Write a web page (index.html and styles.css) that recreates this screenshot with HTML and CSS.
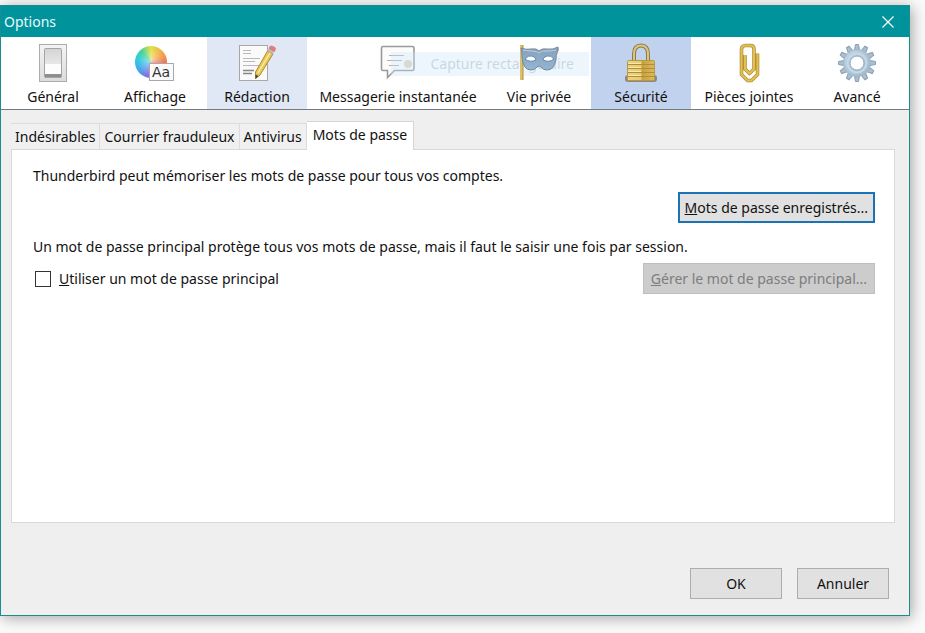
FILE: index.html
```html
<!DOCTYPE html>
<html lang="fr">
<head>
    <meta charset="UTF-8">
    <meta name="viewport" content="width=device-width, initial-scale=1.0">
    <title>Options</title>
    <link rel="stylesheet" href="styles.css">
</head>
<body>
    <div class="window">
        <header class="title-bar">
            <h1>Options</h1>
            <button class="close" aria-label="Fermer">
                <svg width="12" height="12" viewBox="0 0 12 12"><path d="M0.5 0.5 L11.5 11.5 M11.5 0.5 L0.5 11.5" stroke="#fff" stroke-width="1.2"/></svg>
            </button>
        </header>

        <nav class="categories">
            <button class="category">
                <svg width="40" height="40" viewBox="0 0 40 40">
                    <defs>
                        <linearGradient id="plate" x1="0" y1="0" x2="0" y2="1"><stop offset="0" stop-color="#f4f4f4"/><stop offset="1" stop-color="#dcdcdc"/></linearGradient>
                        <linearGradient id="rocker" x1="0" y1="0" x2="0" y2="1"><stop offset="0" stop-color="#d4d4d4"/><stop offset="1" stop-color="#e9e9e9"/></linearGradient>
                        <linearGradient id="shade" x1="0" y1="0" x2="0" y2="1"><stop offset="0" stop-color="#c4c4c4"/><stop offset="1" stop-color="#8a8a8a"/></linearGradient>
                    </defs>
                    <rect x="6.5" y="1.5" width="27" height="37" fill="url(#plate)" stroke="#acacac"/>
                    <rect x="11.5" y="5.5" width="17" height="29" rx="1" fill="url(#shade)" stroke="#a4a4a4"/>
                    <rect x="12" y="6" width="16" height="16" fill="url(#rocker)"/>
                    <rect x="12" y="21" width="16" height="10" fill="#fdfdfd"/>
                </svg>
                <span>Général</span>
            </button>
            <button class="category">
                <svg width="40" height="40" viewBox="0 0 40 40">
                    <foreignObject x="0" y="3" width="32" height="32"><div class="color-wheel"></div></foreignObject>
                    <rect x="14.5" y="20.5" width="24" height="17" fill="#fafafa" stroke="#a9a9a9"/>
                    <text x="17" y="34" class="wheel-text">Aa</text>
                </svg>
                <span>Affichage</span>
            </button>
            <button class="category hover">
                <svg width="40" height="40" viewBox="0 0 40 40">
                    <rect x="2.5" y="2.5" width="28" height="35" fill="#fafafa" stroke="#a8a8a8"/>
                    <path d="M6 7.5 h8 M6 10.5 h8 M6 15.5 h17 M6 18.5 h12 M6 22.5 h16" stroke="#b9b9b9"/>
                    <path d="M6 27.5 h11 M6 30.5 h9" stroke="#858585" stroke-width="1.5"/>
                    <path d="M30.5 8 L36 11 L23 32 L18.5 35.5 L18.5 29 Z" fill="#e8c650" stroke="#b08d38"/>
                    <path d="M33 10 L21 30" stroke="#fae99a" stroke-width="1.5"/>
                    <path d="M18.5 31.5 L21.5 33 L18.5 36 Z" fill="#444"/>
                    <path d="M30.5 8 L32 5.5 L37.5 8.5 L36 11 Z" fill="#b8bdc3"/>
                    <path d="M32 5.5 L33 3.5 Q34 2 38 4.5 Q39 5 37.5 8.5 Z" fill="#e57b78" stroke="#e08080"/>
                </svg>
                <span>Rédaction</span>
            </button>
            <button class="category">
                <svg width="40" height="40" viewBox="0 0 40 40">
                    <path d="M4.5 3.5 h30 q1.5 0 1.5 1.5 v21 q0 1.5 -1.5 1.5 h-18 l-7 7 v-7 h-4.5 q-1.5 0 -1.5 -1.5 v-21 q0 -1.5 1.5 -1.5 z" fill="#fcfcfc" stroke="#9a9a9a" stroke-width="1.6"/>
                    <path d="M11 12.5 h15 M9 17.5 h15 M11 22.5 h10" stroke="#b0b0b0"/>
                </svg>
                <span>Messagerie instantanée</span>
            </button>
            <button class="category">
                <svg class="above-hint" width="40" height="40" viewBox="0 0 40 40">
                    <defs><linearGradient id="mask" x1="0" y1="0" x2="0" y2="1"><stop offset="0" stop-color="#86a0b9"/><stop offset="1" stop-color="#94b5d6"/></linearGradient></defs>
                    <rect x="1" y="2" width="3" height="35" fill="#dcc06a"/>
                    <path d="M4 2 v35" stroke="#a98f45"/>
                    <path d="M2 5 q5 2 10 1 q6 -1 8 2 q3 -3 8 -2 q6 1 11 -2 q1 3 -1 6 q-1 2 -1 7 q-2 10 -9 10 q-4 0 -6 -3 q-2 -2 -4 0 q-2 3 -6 3 q-8 0 -9 -13 q0 -5 -1 -9 z" fill="url(#mask)" stroke="#76899b"/>
                    <path d="M4 7 q5 1 9 1 q5 0 7 2 q3 -3 8 -2 q5 0 9 -1" fill="none" stroke="#bdd0e0"/>
                    <path d="M6 16 q3 -4 7 -3 q4 1 4 4 q-6 3 -11 -1 z M24 17 q0 -3 4 -4 q4 -1 7 3 q-5 4 -11 1 z" fill="#fff" stroke="#5f87ae"/>
                </svg>
                <span>Vie privée</span>
            </button>
            <button class="category selected">
                <svg width="40" height="40" viewBox="0 0 40 40">
                    <defs><linearGradient id="lock" x1="0" y1="0" x2="1" y2="0"><stop offset="0" stop-color="#edd47c"/><stop offset="0.5" stop-color="#e6ca70"/><stop offset="0.54" stop-color="#c7a03e"/><stop offset="1" stop-color="#dcbd5b"/></linearGradient></defs>
                    <rect x="4" y="32" width="32" height="7" rx="3" fill="#8b897f"/>
                    <path d="M13 18 v-7 q0 -8.5 7 -8.5 t7 8.5 v7" fill="none" stroke="#8f7b3c" stroke-width="4"/>
                    <path d="M13 18 v-7 q0 -8.5 7 -8.5 t7 8.5 v7" fill="none" stroke="#d8c68a" stroke-width="2"/>
                    <rect x="6.5" y="17.5" width="27" height="20" rx="1" fill="url(#lock)" stroke="#b8974a"/>
                    <path d="M7 21.5 h26 M7 25.5 h26 M7 29.5 h26 M7 33.5 h26" stroke="#b18c3a"/>
                    <path d="M7 20.5 h13 M7 24.5 h13 M7 28.5 h13 M7 32.5 h13" stroke="#f7e9a8"/>
                </svg>
                <span>Sécurité</span>
            </button>
            <button class="category">
                <svg width="40" height="40" viewBox="0 0 40 40">
                    <g fill="none" stroke-linejoin="round">
                        <path d="M16 12 v14 l4.5 4.5 l4.5 -4.5 v-20 q0 -3.5 -3.5 -3.5 h-5 q-4 0 -4 4 v25 l6 6 h4 l6 -6 v-21" stroke="#b8902f" stroke-width="3.6"/>
                        <path d="M16 12 v14 l4.5 4.5 l4.5 -4.5 v-20 q0 -3.5 -3.5 -3.5 h-5 q-4 0 -4 4 v25 l6 6 h4 l6 -6 v-21" stroke="#e0c058" stroke-width="2"/>
                    </g>
                </svg>
                <span>Pièces jointes</span>
            </button>
            <button class="category">
                <svg width="40" height="40" viewBox="0 0 40 40">
                    <defs>
                        <linearGradient id="gear" x1="0" y1="0" x2="1" y2="1"><stop offset="0" stop-color="#c3d6e5"/><stop offset="1" stop-color="#9db7cc"/></linearGradient>
                        <path id="tooth" d="M17.5 7 L18.5 1.5 H21.5 L22.5 7 Z"/>
                    </defs>
                    <g fill="#aabfd0" stroke="#899fb1">
                        <use href="#tooth"/>
                        <use href="#tooth" transform="rotate(30 20 20)"/>
                        <use href="#tooth" transform="rotate(60 20 20)"/>
                        <use href="#tooth" transform="rotate(90 20 20)"/>
                        <use href="#tooth" transform="rotate(120 20 20)"/>
                        <use href="#tooth" transform="rotate(150 20 20)"/>
                        <use href="#tooth" transform="rotate(180 20 20)"/>
                        <use href="#tooth" transform="rotate(210 20 20)"/>
                        <use href="#tooth" transform="rotate(240 20 20)"/>
                        <use href="#tooth" transform="rotate(270 20 20)"/>
                        <use href="#tooth" transform="rotate(300 20 20)"/>
                        <use href="#tooth" transform="rotate(330 20 20)"/>
                    </g>
                    <circle cx="20" cy="20" r="13.5" fill="url(#gear)" stroke="#a3b8c9"/>
                    <circle cx="20" cy="20" r="9.5" fill="none" stroke="#c6d9e8" stroke-width="2"/>
                    <circle cx="20" cy="20" r="7" fill="#fff" stroke="#93aabd"/>
                </svg>
                <span>Avancé</span>
            </button>
            <div class="capture-hint"><i></i>Capture rectangulaire</div>
        </nav>

        <main>
            <div class="tabs" role="tablist">
                <button class="tab" role="tab">Indésirables</button>
                <button class="tab" role="tab">Courrier frauduleux</button>
                <button class="tab" role="tab">Antivirus</button>
                <button class="tab active" role="tab" aria-selected="true">Mots de passe</button>
            </div>
            <section class="panel" role="tabpanel">
                <p>Thunderbird peut mémoriser les mots de passe pour tous vos comptes.</p>
                <div class="row end">
                    <button class="btn focused"><u>M</u>ots de passe enregistrés...</button>
                </div>
                <p class="second">Un mot de passe principal protège tous vos mots de passe, mais il faut le saisir une fois par session.</p>
                <div class="row">
                    <label class="check" for="master"><input type="checkbox" id="master"><span><u>U</u>tiliser un mot de passe principal</span></label>
                    <button class="btn" disabled><u>G</u>érer le mot de passe principal...</button>
                </div>
            </section>
        </main>

        <footer>
            <button class="btn dialog-btn">OK</button>
            <button class="btn dialog-btn">Annuler</button>
        </footer>
    </div>
</body>
</html>
```

FILE: styles.css
```css
* {
    box-sizing: border-box;
}
body {
    margin: 0;
    min-height: 100vh;
    display: flex;
    padding: 5px 15px 17px 0;
    background: #fbfbfb;
    font-family: "Noto Sans", "Open Sans", sans-serif;
    font-size: 14px;
    line-height: 20px;
    color: #111;
}
button {
    font: inherit;
    color: inherit;
    border: none;
    background: none;
    padding: 0;
}
p {
    margin: 0;
}
.window {
    flex: 1;
    display: flex;
    flex-direction: column;
    border: 1px solid #1b8c90;
    background: #efefef;
    box-shadow: 2px 2px 14px rgba(0, 0, 0, 0.35);
}
.title-bar {
    display: flex;
    justify-content: space-between;
    align-items: center;
    height: 31px;
    padding: 0 15px 0 3px;
    background: #00939b;
    color: #e8fafa;
}
.title-bar h1 {
    margin: 0;
    font-size: 14px;
    font-weight: normal;
}
.close {
    display: flex;
}
.categories {
    position: relative;
    display: grid;
    grid-template-columns: 100fr 100fr 100fr 178fr 100fr 100fr 112fr 100fr;
    gap: 2px;
    padding: 0 2px;
    height: 73px;
    background: #fff;
    border-bottom: 1px solid #747b80;
}
.category {
    display: flex;
    flex-direction: column;
    align-items: center;
    gap: 4px;
    padding-top: 6px;
    white-space: nowrap;
}
.category.hover {
    background: #e0e8f6;
}
.category.selected {
    background: #c1d2ee;
}
.above-hint {
    position: relative;
    z-index: 1;
}
.color-wheel {
    width: 32px;
    height: 32px;
    border-radius: 50%;
    background: radial-gradient(circle, rgba(255, 255, 255, 0.5), transparent 60%),
        conic-gradient(#e6e04a, #f3a04b 60deg, #ef6a63 100deg, #c56bd0 150deg, #8c6be0 190deg, #4aa0ec 230deg, #2fcbe0 280deg, #45d496 320deg, #e6e04a);
}
.wheel-text {
    font: 14px "DejaVu Sans", sans-serif;
    fill: #333;
}
/* half faded tooltip that lies over the toolbar */
.capture-hint {
    position: absolute;
    left: 43%;
    top: 15px;
    display: flex;
    align-items: center;
    gap: 18px;
    width: 198px;
    height: 24px;
    padding-left: 13px;
    background: rgba(205, 230, 250, 0.35);
    color: rgba(130, 150, 165, 0.35);
    white-space: nowrap;
    pointer-events: none;
}
.capture-hint i {
    width: 8px;
    height: 8px;
    border-radius: 50%;
    background: #d8d8d4;
}
main {
    flex: 1;
    display: flex;
    flex-direction: column;
    padding: 11px 14px 0 10px;
}
.tabs {
    display: flex;
    align-items: flex-end;
}
.tab {
    height: 26px;
    padding: 0 4px;
    border: 1px solid #dcdcdc;
    border-width: 1px 1px 0 0;
    background: #f0f0f0;
}
.tab.active {
    height: 29px;
    padding: 0 6px 2px;
    margin-bottom: -1px;
    background: #fff;
    border-color: #d5d5d5;
    z-index: 1;
}
.panel {
    flex: 1;
    padding: 16px 19px 16px 21px;
    background: #fff;
    border: 1px solid #d9d9d9;
}
.row {
    display: flex;
    justify-content: space-between;
    align-items: center;
}
.row.end {
    justify-content: flex-end;
    margin-top: 6px;
}
.second {
    margin: 14px 0 6px;
}
.btn {
    height: 31px;
    padding: 0 7px;
    border: 1px solid #adadad;
    background: #e1e1e1;
}
.btn.focused {
    padding: 0 5px;
    border: 2px solid #1974b5;
}
.btn:disabled {
    background: #cccccc;
    border-color: #bfbfbf;
    color: #7d7d7d;
}
.check {
    display: flex;
    align-items: center;
    gap: 8px;
}
.check input {
    appearance: none;
    width: 16px;
    height: 16px;
    margin: 0 0 0 2px;
    border: 1px solid #333;
    background: #fff;
}
.check input:checked {
    background: #1974b5;
}
footer {
    display: flex;
    justify-content: flex-end;
    gap: 15px;
    padding: 45px 20px 16px;
}
.dialog-btn {
    width: 92px;
}
```
